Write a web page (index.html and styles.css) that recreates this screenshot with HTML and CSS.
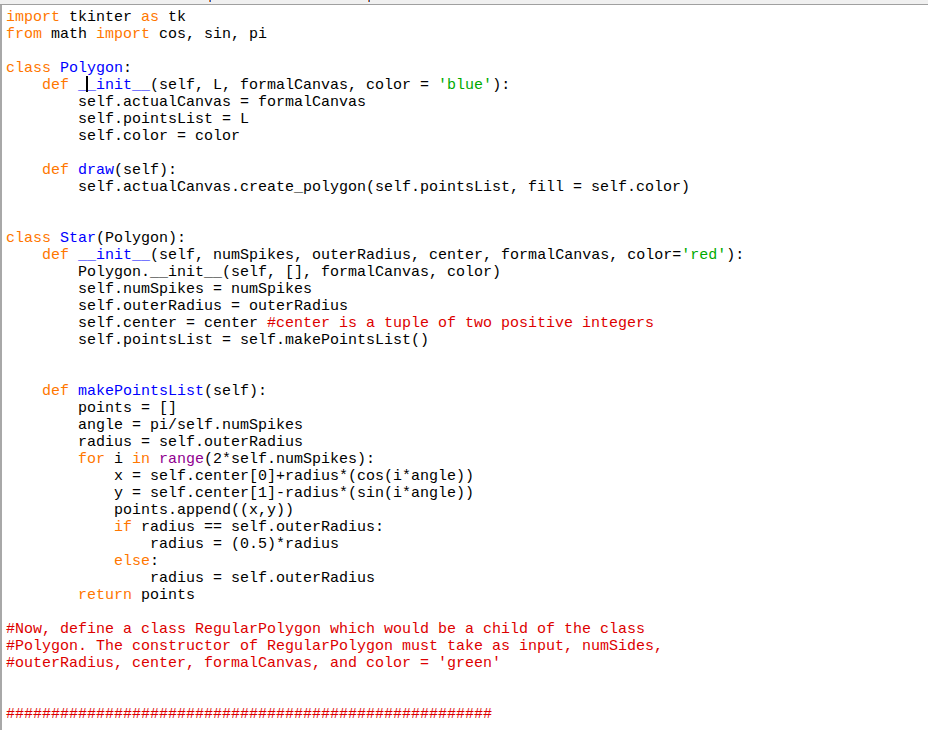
FILE: index.html
```html
<!DOCTYPE html>
<html>
<head>
<meta charset="utf-8">
<link rel="stylesheet" href="styles.css">
</head>
<body>
<div class="topbar"><span class="mark mark-a"></span><span class="mark mark-b"></span></div>
<div class="editor">
<pre class="code"><span class="kw">import</span> tkinter <span class="kw">as</span> tk
<span class="kw">from</span> math <span class="kw">import</span> cos, sin, pi

<span class="kw">class</span> <span class="def">Polygon</span>:
    <span class="kw">def</span> <span class="def">__init__</span>(self, L, formalCanvas, color = <span class="str">'blue'</span>):
        self.actualCanvas = formalCanvas
        self.pointsList = L
        self.color = color

    <span class="kw">def</span> <span class="def">draw</span>(self):
        self.actualCanvas.create_polygon(self.pointsList, fill = self.color)


<span class="kw">class</span> <span class="def">Star</span>(Polygon):
    <span class="kw">def</span> <span class="def">__init__</span>(self, numSpikes, outerRadius, center, formalCanvas, color=<span class="str">'red'</span>):
        Polygon.__init__(self, [], formalCanvas, color)
        self.numSpikes = numSpikes
        self.outerRadius = outerRadius
        self.center = center <span class="cm">#center is a tuple of two positive integers</span>
        self.pointsList = self.makePointsList()


    <span class="kw">def</span> <span class="def">makePointsList</span>(self):
        points = []
        angle = pi/self.numSpikes
        radius = self.outerRadius
        <span class="kw">for</span> i <span class="kw">in</span> <span class="bi">range</span>(2*self.numSpikes):
            x = self.center[0]+radius*(cos(i*angle))
            y = self.center[1]-radius*(sin(i*angle))
            points.append((x,y))
            <span class="kw">if</span> radius == self.outerRadius:
                radius = (0.5)*radius
            <span class="kw">else</span>:
                radius = self.outerRadius
        <span class="kw">return</span> points

<span class="cm">#Now, define a class RegularPolygon which would be a child of the class</span>
<span class="cm">#Polygon. The constructor of RegularPolygon must take as input, numSides,</span>
<span class="cm">#outerRadius, center, formalCanvas, and color = 'green'</span>


<span class="cm">######################################################</span>
</pre>
<span class="caret"></span>
</div>
</body>
</html>
```

FILE: styles.css
```css
html, body {
  margin: 0;
  padding: 0;
  background: #ffffff;
}
body {
  width: 928px;
  height: 730px;
  overflow: hidden;
}
.topbar {
  position: relative;
  height: 4px;
  background: #f0f0f0;
  border-bottom: 1px solid #a0a0a0;
}
.mark {
  position: absolute;
  top: 0;
  width: 2px;
  height: 2px;
  background: linear-gradient(to right, #e07820 50%, #3060c0 50%);
}
.mark-a { left: 209px; }
.mark-b { left: 368px; }
.editor {
  position: relative;
  height: 725px;
  border-left: 2px solid #a8a8a8;
  padding: 4px 0 0 4px;
  box-sizing: border-box;
}
.code {
  margin: 0;
  font-family: "Liberation Mono", "DejaVu Sans Mono", monospace;
  font-size: 15px;
  line-height: 17px;
  color: #000000;
}
.kw { color: #ff7700; }
.def { color: #0000ff; }
.str { color: #00aa00; }
.cm { color: #dd0000; }
.bi { color: #900090; }
.caret {
  position: absolute;
  left: 84px;
  top: 71px;
  width: 2px;
  height: 16px;
  background: #000000;
}
```
